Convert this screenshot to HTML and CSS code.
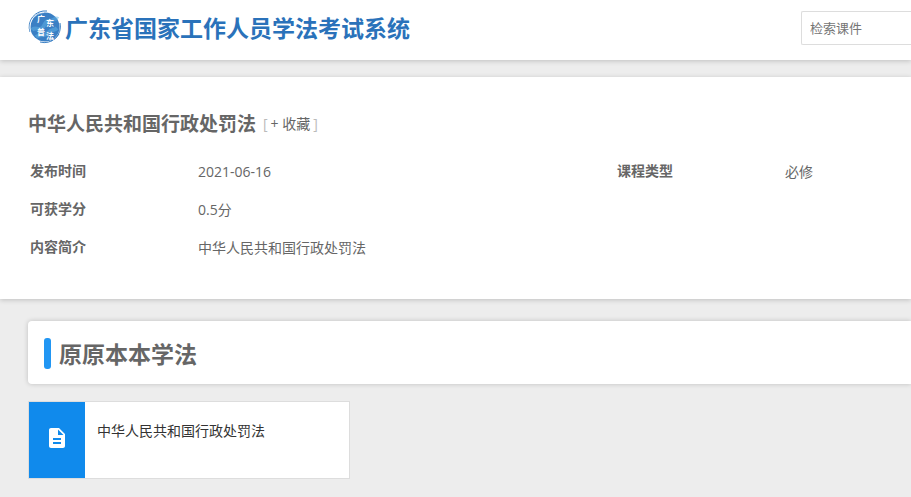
FILE: index.html
```html
<!DOCTYPE html>
<html lang="zh-CN">
<head>
    <meta charset="UTF-8">
    <meta name="viewport" content="width=device-width, initial-scale=1.0">
    <title>广东省国家工作人员学法考试系统</title>
    <link rel="stylesheet" href="styles.css">
</head>
<body>
    <header class="header">
        <a class="logo" href="#">
            <svg class="logo-mark" viewBox="0 0 34 34" aria-hidden="true">
                <circle cx="17" cy="17" r="14.6" fill="#3a7fc4"/>
                <path d="M4 20c3-4 6 1 10-2s2-7 7-7 6-4 9-2M8 27c5-4 8 0 12-4s6-2 9-5" fill="none" stroke="#62b4e6" stroke-width="4" opacity=".5"/>
                <path d="M2 22A16 16 0 0 1 19 1M5 9a15 15 0 0 1 7-6M32 13a16 16 0 0 1-20 19M31 24a15 15 0 0 1-8 7" fill="none" stroke="#3a7fc4" stroke-width="1"/>
                <path d="M2.500 22A15 15 0 0 1 16 2.500" fill="none" stroke="#fff" stroke-width=".6"/>
                <g class="logo-seal">
                    <text x="9" y="12">广</text>
                    <text x="18" y="16">东</text>
                    <text x="9" y="25">普</text>
                    <text x="18" y="29">法</text>
                </g>
            </svg>
            <span class="logo-text">广东省国家工作人员学法考试系统</span>
        </a>
        <form class="search">
            <input type="text" class="search-input" placeholder="检索课件" aria-label="检索课件">
        </form>
    </header>

    <section class="course">
        <div class="course-head">
            <h1>中华人民共和国行政处罚法</h1>
            <span class="collect">[<button type="button">+ 收藏</button>]</span>
        </div>
        <table class="course-info">
            <colgroup>
                <col class="col-label">
                <col>
                <col class="col-label">
                <col class="col-type">
            </colgroup>
            <tr>
                <th scope="row">发布时间</th>
                <td>2021-06-16</td>
                <th scope="row">课程类型</th>
                <td>必修</td>
            </tr>
            <tr>
                <th scope="row">可获学分</th>
                <td colspan="3">0.5分</td>
            </tr>
            <tr>
                <th scope="row">内容简介</th>
                <td colspan="3">中华人民共和国行政处罚法</td>
            </tr>
        </table>
    </section>

    <main class="content">
        <div class="section-title">
            <h2>原原本本学法</h2>
        </div>
        <a class="chapter" href="#">
            <span class="chapter-icon">
                <svg viewBox="0 0 24 24" width="24" height="24" aria-hidden="true">
                    <path fill="#fff" d="M14 2H6c-1.100 0-2 .9-2 2v16c0 1.100.9 2 2 2h12c1.100 0 2-.9 2-2V8l-6-6zm2 16H8v-2h8v2zm0-4H8v-2h8v2zm-3-5V3.500L18.500 9H13z"/>
                </svg>
            </span>
            <span class="chapter-name">中华人民共和国行政处罚法</span>
        </a>
    </main>
</body>
</html>
```
FILE: styles.css
```css
* {
    box-sizing: border-box;
}
body {
    margin: 0;
    background-color: #ededed;
    color: #666;
    font-family: "Open Sans", "Noto Sans CJK SC", sans-serif;
    font-size: 14px;
    line-height: 20px;
}
h1, h2 {
    margin: 0;
    font-family: "Noto Sans CJK SC", sans-serif;
    font-weight: bold;
}
a {
    color: inherit;
    text-decoration: none;
}
.header {
    display: flex;
    justify-content: space-between;
    align-items: center;
    height: 60px;
    padding-left: 28px;
    padding-bottom: 4px;
    background-color: #fff;
    box-shadow: 0 1px 5px rgba(0,0,0,0.2);
}
.logo {
    display: flex;
    align-items: center;
    gap: 3px;
    padding-bottom: 2px;
}
.logo-mark {
    width: 34px;
    height: 34px;
}
.logo-seal {
    fill: #fff;
    font-family: "Noto Sans CJK SC", sans-serif;
    font-size: 8px;
    font-weight: bold;
}
.logo-text {
    color: #2a72ba;
    font-family: "Noto Sans CJK SC", sans-serif;
    font-size: 23px;
    font-weight: bold;
    line-height: 34px;
}
.search-input {
    display: block;
    width: 110px;
    height: 34px;
    padding: 0 8px 2px;
    border: 1px solid #ddd;
    border-right: none;
    border-radius: 2px 0 0 2px;
    font-family: "Noto Sans CJK SC", sans-serif;
    font-size: 13px;
}
.search-input::placeholder {
    color: #757575;
}
.course {
    margin-top: 17px;
    padding: 32px 0 33px 28px;
    background-color: #fff;
    box-shadow: 0 1px 5px rgba(0,0,0,0.2);
}
.course-head {
    display: flex;
    align-items: center;
    gap: 7px;
    margin-bottom: 15px;
}
.course-head h1 {
    font-size: 19px;
    line-height: 28px;
}
.collect {
    padding-top: 2px;
    color: #bbb;
}
.collect button {
    padding: 0 3px;
    border: none;
    background: none;
    color: #666;
    font: inherit;
    cursor: pointer;
}
.course-info {
    width: 100%;
    border-collapse: collapse;
    table-layout: fixed;
}
.course-info th,
.course-info td {
    height: 38px;
    padding: 0 2px;
    text-align: left;
}
.course-info td {
    padding-top: 2px;
}
.col-label {
    width: 168px;
}
.col-type {
    width: 128px;
}
.content {
    padding: 22px 0 18px 28px;
}
.section-title {
    padding: 17px 16px 15px;
    border-radius: 4px 0 0 4px;
    background-color: #fff;
    box-shadow: 0 0 5px rgba(0,0,0,0.2);
}
.section-title h2 {
    display: flex;
    gap: 8px;
    font-size: 23px;
    line-height: 31px;
}
.section-title h2::before {
    content: "";
    width: 7px;
    border-radius: 3px;
    background-color: #2196f3;
}
.chapter {
    display: flex;
    width: 322px;
    max-width: 100%;
    margin-top: 17px;
    border: 1px solid #ddd;
    background-color: #fff;
    color: #333;
}
.chapter-icon {
    display: flex;
    align-items: center;
    justify-content: center;
    width: 56px;
    height: 76px;
    padding-bottom: 4px;
    background-color: #108aec;
}
.chapter-name {
    padding: 19px 12px;
}
```
